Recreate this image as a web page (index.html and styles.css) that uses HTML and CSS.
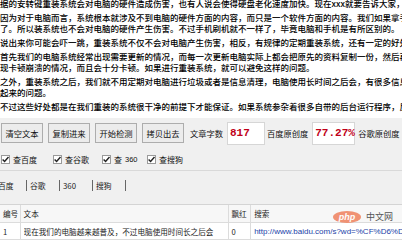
FILE: index.html
```html
<!DOCTYPE html>
<html lang="zh-CN">
<head>
<meta charset="utf-8">
<title>原创度检测</title>
<link rel="stylesheet" href="styles.css">
</head>
<body>
<div class="editor">
  <p>据的安转键重装系统会对电脑的硬件造成伤害，也有人说会使得硬盘老化速度加快。现在xxx就要告诉大家，答</p>
  <p>因为对于电脑而言，系统根本就涉及不到电脑的硬件方面的内容，而只是一个软件方面的内容。我们如果拿手机来<br>了。所以装系统也不会对电脑的硬件产生伤害。不过手机刷机就不一样了，毕竟电脑和手机是有所区别的。</p>
  <p>说出来你可能会吓一跳，重装系统不仅不会对电脑产生伤害，相反，有规律的定期重装系统，还有一定的好处。</p>
  <p>首先我们的电脑系统经常出现需要更新的情况，而每一次更新电脑实际上都会把原先的资料复制一份，然后再更新<br>现卡顿崩溃的情况，而且会十分卡顿。如果进行重装系统，就可以避免这样的问题。</p>
  <p>之外，重装系统之后，我们就不用定期对电脑进行垃圾或者是信息清理，电脑使用长时间之后会，有很多信息储存<br>起来的问题。</p>
  <p>不过这些好处都是在我们重装的系统很干净的前提下才能保证。如果系统参杂着很多自带的后台运行程序，反而会</p>
</div>
<div class="panel">
  <div class="toolbar">
    <button class="btn">清空文本</button>
    <button class="btn">复制进来</button>
    <button class="btn">开始检测</button>
    <button class="btn last">拷贝出去</button>
    <span class="label l1">文章字数</span>
    <span class="field count">817</span>
    <span class="label l2">百度原创度</span>
    <span class="field rate">77.27%</span>
    <span class="label l3">谷歌原创度</span>
    <span class="field rest"></span>
  </div>
  <div class="checks">
    <label class="check w1"><span class="box"><svg viewBox="0 0 9 9" width="9" height="9"><path d="M1.6 4.4 L3.6 6.5 L7.5 2" fill="none" stroke="#222" stroke-width="1.4"/></svg></span>查百度</label>
    <label class="check w2"><span class="box"><svg viewBox="0 0 9 9" width="9" height="9"><path d="M1.6 4.4 L3.6 6.5 L7.5 2" fill="none" stroke="#222" stroke-width="1.4"/></svg></span>查谷歌</label>
    <label class="check w3"><span class="box"><svg viewBox="0 0 9 9" width="9" height="9"><path d="M1.6 4.4 L3.6 6.5 L7.5 2" fill="none" stroke="#222" stroke-width="1.4"/></svg></span>查<span class="num">360</span></label>
    <label class="check"><span class="box"><svg viewBox="0 0 9 9" width="9" height="9"><path d="M1.6 4.4 L3.6 6.5 L7.5 2" fill="none" stroke="#222" stroke-width="1.4"/></svg></span>查搜狗</label>
  </div>
  <div class="tabs">
    <span class="tab first">百度</span>
    <span class="tab">谷歌</span>
    <span class="tab">360</span>
    <span class="tab">搜狗</span>
    <span class="tab end"></span>
  </div>
  <div class="gridwrap">
    <table class="grid">
      <thead>
        <tr><th class="c1">编号</th><th class="c2">文本</th><th class="c3">飘红</th><th class="c4">搜索</th></tr>
      </thead>
      <tbody>
        <tr><td class="c1">1</td><td class="c2"><div class="clip">现在我们的电脑越来越普及，不过电脑使用时间长之后会</div></td><td class="c3">0</td><td class="c4"><div class="clip link">http://www.baidu.com/s?wd=%CF%D6%D4%DA%CE%D2</div></td></tr>
      </tbody>
    </table>
    <div class="watermark"><span class="php">php</span><span class="cn">中文网</span></div>
  </div>
</div>
</body>
</html>
```

FILE: styles.css
```css
html, body {
  margin: 0;
  padding: 0;
}
body {
  width: 402px;
  height: 240px;
  overflow: hidden;
  background: #f0f0f0;
  font-family: "Noto Sans CJK SC", "Liberation Sans", sans-serif;
  color: #111;
}
.editor {
  background: #fff;
  height: 118px;
  overflow: hidden;
  font-size: 8.5px;
  line-height: 11px;
  font-weight: 500;
  color: #000;
}
.editor p {
  margin: 0 0 3px;
  white-space: nowrap;
}
.editor p:first-child {
  margin-top: -2px;
}
.panel {
  padding-top: 5px;
}
.toolbar {
  display: flex;
  align-items: center;
  height: 20px;
  padding-left: 1px;
  white-space: nowrap;
}
.toolbar > * {
  flex: none;
}
.btn {
  width: 42px;
  height: 20px;
  margin: 0 5px 0 0;
  padding: 0;
  border: 1px solid #adadad;
  background: #ececec;
  font-family: inherit;
  font-size: 8.3px;
  color: #111;
}
.btn.last {
  margin-right: 6px;
}
.label {
  font-size: 8.25px;
  color: #111;
}
.l1 { margin-right: 4px; }
.l2 { margin-right: 4px; }
.l3 { margin-right: 2px; }
.field {
  display: flex;
  align-items: center;
  height: 23px;
  box-sizing: border-box;
  background: #fff;
  border: 1px solid #d6d6d6;
  font-family: "Liberation Mono", monospace;
  font-weight: bold;
  color: #c00018;
  font-size: 11px;
  padding-left: 2px;
}
.count { width: 38px; margin-right: 2px; }
.rate { width: 43px; margin-right: 3px; }
.rest { width: 10px; }
.checks {
  display: flex;
  align-items: center;
  height: 22px;
  margin-top: 5px;
  padding-left: 1px;
  font-size: 8px;
  color: #111;
}
.check {
  display: flex;
  align-items: center;
  gap: 3px;
}
.w1 { width: 52px; }
.w2 { width: 49px; }
.w3 { width: 45px; }
.box {
  display: inline-flex;
  width: 9px;
  height: 9px;
  box-sizing: border-box;
  border: 1px solid #9a9a9a;
  background: #fff;
  align-items: center;
  justify-content: center;
}
.box svg {
  display: block;
  flex: none;
}
.num {
  font-family: "Liberation Sans", sans-serif;
  font-size: 7.5px;
}
.tabs {
  display: flex;
  align-items: center;
  height: 29px;
  border-top: 1px solid #d9d9d9;
  font-size: 7.8px;
  color: #222;
}
.tab {
  display: flex;
  align-items: center;
  height: 11px;
  width: 29px;
  padding-left: 3px;
  border-left: 1px solid #666;
}
.tab.first {
  border-left: none;
  width: 28px;
  padding-left: 0;
  margin-left: -2px;
}
.tab.end { width: 0; padding: 0; }
.gridwrap {
  position: relative;
  margin-top: 4px;
  background: #fff;
  height: 36px;
  border-top: 1px solid #d4d4d4;
}
.grid {
  border-collapse: collapse;
  table-layout: fixed;
  width: 420px;
  font-size: 7.6px;
  color: #222;
}
.grid th, .grid td {
  border-right: 1px solid #dcdcdc;
  border-bottom: 1px solid #dcdcdc;
  padding: 0 0 0 3px;
  text-align: left;
  font-weight: normal;
  white-space: nowrap;
  overflow: hidden;
}
.grid th {
  height: 17px;
  background: #f7f7f7;
}
.grid td {
  height: 16px;
}
.c1 { width: 16px; }
.c2 { width: 198px; }
.c3 { width: 18px; }
.c4 { width: 160px; }
.clip {
  overflow: hidden;
  white-space: nowrap;
}
.link {
  color: #1a3fa8;
  font-family: "Liberation Sans", sans-serif;
  font-size: 8px;
}
.watermark {
  position: absolute;
  left: 333px;
  top: 5px;
  display: flex;
  align-items: center;
  gap: 5px;
}
.php {
  display: inline-block;
  width: 28px;
  height: 12px;
  line-height: 12px;
  border-radius: 50%;
  background: #f08866;
  color: #fff;
  font-family: "Liberation Sans", sans-serif;
  font-weight: bold;
  font-style: italic;
  font-size: 9px;
  text-align: center;
  opacity: 0.9;
}
.cn {
  font-size: 9px;
  color: #555;
}
```
